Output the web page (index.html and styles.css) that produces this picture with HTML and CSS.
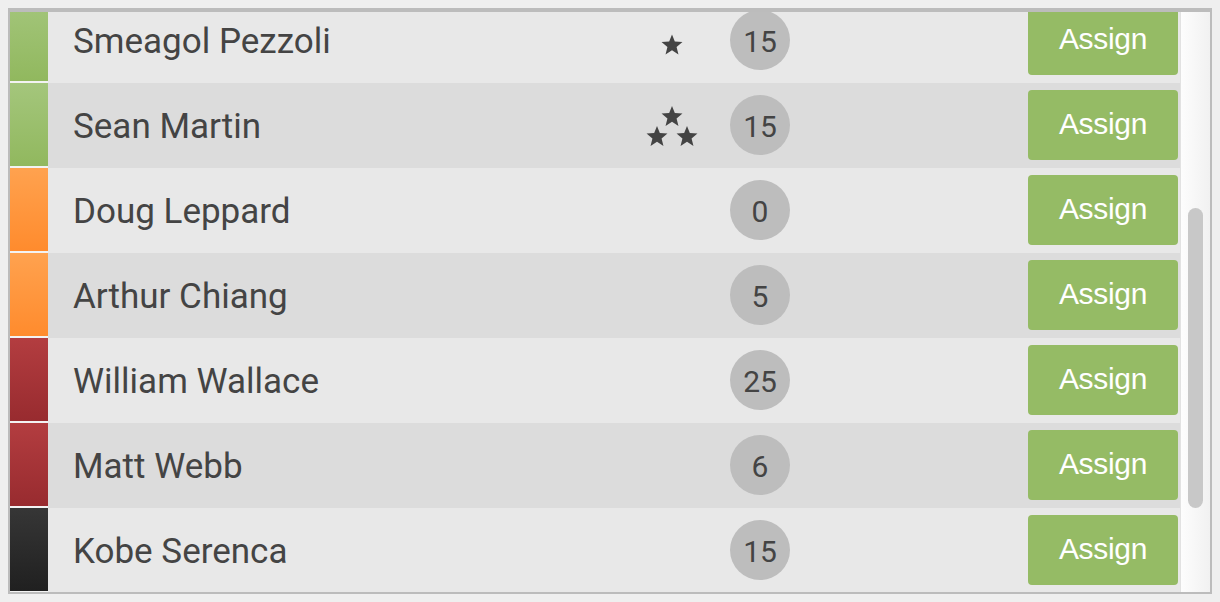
FILE: index.html
```html
<!DOCTYPE html>
<html lang="en">
<head>
    <meta charset="UTF-8">
    <meta name="viewport" content="width=device-width, initial-scale=1.0">
    <title>Crew Assignment</title>
    <link rel="stylesheet" href="styles.css">
</head>
<body>
    <div class="panel">
        <div class="list-viewport">
            <ul class="crew-list">
                <li class="crew-row">
                    <span class="level level-green"></span>
                    <span class="crew-name">Smeagol Pezzoli</span>
                    <span class="crew-stars">
                        <svg width="52" height="44" viewBox="0 0 52 44">
                            <path transform="translate(26 27.5)" d="M0,-11 L2.82,-3.88 L10.46,-3.4 L4.57,1.48 L6.47,8.9 L0,4.8 L-6.47,8.9 L-4.57,1.48 L-10.46,-3.4 L-2.82,-3.88 Z"/>
                        </svg>
                    </span>
                    <span class="crew-count">15</span>
                    <button class="assign-btn">Assign</button>
                </li>
                <li class="crew-row">
                    <span class="level level-green"></span>
                    <span class="crew-name">Sean Martin</span>
                    <span class="crew-stars">
                        <svg width="52" height="44" viewBox="0 0 52 44">
                            <path transform="translate(26 14)" d="M0,-11 L2.82,-3.88 L10.46,-3.4 L4.57,1.48 L6.47,8.9 L0,4.8 L-6.47,8.9 L-4.57,1.48 L-10.46,-3.4 L-2.82,-3.88 Z"/>
                            <path transform="translate(11 34)" d="M0,-11 L2.82,-3.88 L10.46,-3.4 L4.57,1.48 L6.47,8.9 L0,4.8 L-6.47,8.9 L-4.57,1.48 L-10.46,-3.4 L-2.82,-3.88 Z"/>
                            <path transform="translate(41 34)" d="M0,-11 L2.82,-3.88 L10.46,-3.4 L4.57,1.48 L6.47,8.9 L0,4.8 L-6.47,8.9 L-4.57,1.48 L-10.46,-3.4 L-2.82,-3.88 Z"/>
                        </svg>
                    </span>
                    <span class="crew-count">15</span>
                    <button class="assign-btn">Assign</button>
                </li>
                <li class="crew-row">
                    <span class="level level-orange"></span>
                    <span class="crew-name">Doug Leppard</span>
                    <span class="crew-stars"></span>
                    <span class="crew-count">0</span>
                    <button class="assign-btn">Assign</button>
                </li>
                <li class="crew-row">
                    <span class="level level-orange"></span>
                    <span class="crew-name">Arthur Chiang</span>
                    <span class="crew-stars"></span>
                    <span class="crew-count">5</span>
                    <button class="assign-btn">Assign</button>
                </li>
                <li class="crew-row">
                    <span class="level level-red"></span>
                    <span class="crew-name">William Wallace</span>
                    <span class="crew-stars"></span>
                    <span class="crew-count">25</span>
                    <button class="assign-btn">Assign</button>
                </li>
                <li class="crew-row">
                    <span class="level level-red"></span>
                    <span class="crew-name">Matt Webb</span>
                    <span class="crew-stars"></span>
                    <span class="crew-count">6</span>
                    <button class="assign-btn">Assign</button>
                </li>
                <li class="crew-row">
                    <span class="level level-black"></span>
                    <span class="crew-name">Kobe Serenca</span>
                    <span class="crew-stars"></span>
                    <span class="crew-count">15</span>
                    <button class="assign-btn">Assign</button>
                </li>
            </ul>
        </div>

        <!-- scrollbar lateral -->
        <div class="scrollbar">
            <div class="scroll-thumb"></div>
        </div>
    </div>
</body>
</html>
```

FILE: styles.css
```css
/* Layout general */
body {
    margin: 8px;
    background-color: #efefef;
    font-family: Roboto, "Liberation Sans", sans-serif;
}

/* Marco de la lista */
.panel {
    display: flex;
    height: calc(100vh - 16px);
    box-sizing: border-box;
    border: 2px solid #bcbcbc;
    border-top-width: 4px;
    background-color: #e8e8e8;
}

.list-viewport {
    flex: 1;
    overflow: hidden;
}

.crew-list {
    list-style: none;
    margin: -14px 0 0 0;
    padding: 0;
}

.crew-row {
    display: flex;
    align-items: center;
    height: 85px;
    padding-bottom: 2px;
    box-sizing: border-box;
    background-color: #e8e8e8;
}

.crew-row:nth-child(even) {
    background-color: #dcdcdc;
}

/* Barra de color a la izquierda */
.level {
    align-self: flex-start;
    flex: 0 0 38px;
    height: 85px;
    margin-bottom: -2px;
    box-sizing: border-box;
    border-bottom: 2px solid #f3f3f3;
}

.level-green {
    background: linear-gradient(#a4c67c, #91b85e);
}

.level-orange {
    background: linear-gradient(#ffa24f, #ff8b2d);
}

.level-red {
    background: linear-gradient(#b33d40, #982b2f);
}

.level-black {
    background: linear-gradient(#363636, #202020);
}

.crew-name {
    flex: 0 0 598px;
    box-sizing: border-box;
    padding: 4px 0 0 25px;
    font-size: 35px;
    color: #444;
    white-space: nowrap;
}

.crew-stars {
    flex: 0 0 52px;
    height: 44px;
}

.crew-stars svg {
    display: block;
    fill: #444;
}

/* Contador redondo */
.crew-count {
    flex: 0 0 60px;
    height: 60px;
    margin-left: 32px;
    padding-top: 3px;
    box-sizing: border-box;
    border-radius: 50%;
    background-color: #bdbdbd;
    color: #444;
    font-size: 30px;
    line-height: 57px;
    text-align: center;
}

.assign-btn {
    margin-left: auto;
    margin-right: 2px;
    width: 150px;
    height: 70px;
    padding: 0 0 2px 0;
    border: none;
    border-radius: 4px;
    background-color: #95bb65;
    color: #fff;
    font-family: "Liberation Sans", Arial, sans-serif;
    font-size: 30px;
    letter-spacing: -0.3px;
    cursor: pointer;
}

/* Scrollbar */
.scrollbar {
    flex: 0 0 30px;
    background: linear-gradient(to right, #fdfdfd, #f1f1f1);
    border-left: 1px solid #e2e2e2;
    box-sizing: border-box;
}

.scroll-thumb {
    width: 15px;
    height: 300px;
    margin: 196px 0 0 7px;
    border-radius: 8px;
    background-color: #c8c8c8;
}
```
